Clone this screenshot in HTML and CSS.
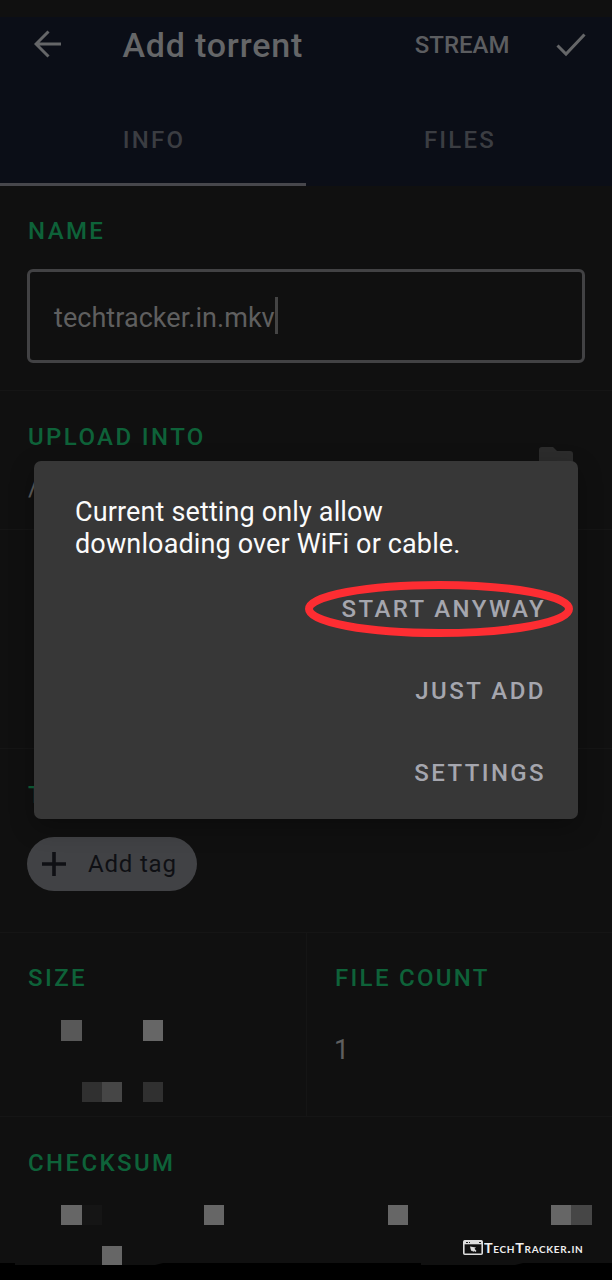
FILE: index.html
```html
<!DOCTYPE html>
<html lang="en">
<head>
<meta charset="utf-8">
<title>Add torrent</title>
<link rel="stylesheet" href="styles.css">
</head>
<body>
<div class="screen">
  <header class="header">
    <div class="toolbar">
      <svg class="back" viewBox="0 0 28 28"><path d="M27 14H2.500M14.500 1.500L2 14l12.500 12.500" fill="none" stroke="currentColor" stroke-width="3"/></svg>
      <h1 class="title">Add torrent</h1>
      <span class="stream">STREAM</span>
      <svg class="check" viewBox="0 0 30 24"><path d="M1.500 12.500l8.500 8.500L28.500 1.500" fill="none" stroke="currentColor" stroke-width="3"/></svg>
    </div>
    <nav class="tabs">
      <div class="tab tab-active">INFO</div>
      <div class="tab">FILES</div>
    </nav>
  </header>
  <section class="section name">
    <h2 class="label">NAME</h2>
    <div class="field"><span class="value">techtracker.in.mkv</span><span class="caret"></span></div>
  </section>
  <section class="section upload">
    <div>
      <h2 class="label">UPLOAD INTO</h2>
      <div class="path">/</div>
    </div>
    <svg class="folder" viewBox="0 0 34 28"><path d="M3 0h11l4 4h13a3 3 0 0 1 3 3v18a3 3 0 0 1-3 3H3a3 3 0 0 1-3-3V3a3 3 0 0 1 3-3z" fill="currentColor"/></svg>
  </section>
  <section class="section options"></section>
  <section class="section tags">
    <h2 class="label">TAGS</h2>
    <div class="chip">
      <svg class="plus" viewBox="0 0 24 24"><path d="M12 0v24M0 12h24" stroke="currentColor" stroke-width="3.600"/></svg>
      <span>Add tag</span>
    </div>
  </section>
  <section class="section facts">
    <div class="fact">
      <h2 class="label">SIZE</h2>
      <div class="mosaic mosaic-size">
        <i class="c3 r1 mid"></i><i class="c7 r1 light"></i>
        <i class="c4 r4 dim"></i><i class="c5 r4 soft"></i><i class="c7 r4 dim"></i>
      </div>
    </div>
    <div class="fact count">
      <h2 class="label">FILE COUNT</h2>
      <div class="number">1</div>
    </div>
  </section>
  <section class="section checksum">
    <h2 class="label">CHECKSUM</h2>
    <div class="mosaic mosaic-sum">
      <i class="c3 r1 light"></i><i class="c4 r1 faint"></i><i class="c10 r1 light"></i><i class="c19 r1 light"></i><i class="c27 r1 light"></i><i class="c28 r1 soft"></i>
      <i class="c5 r3 light"></i>
    </div>
  </section>
  <svg class="navbar" viewBox="0 0 612 17"><path d="M0 0h15v2h140l8-2h258v2h94l8-2h89v17H0z"/></svg>

  <div class="dialog">
    <p class="message">Current setting only allow<br>downloading over WiFi or cable.</p>
    <div class="actions">
      <span class="action start">START ANYWAY</span>
      <span class="action just">JUST ADD</span>
      <span class="action settings">SETTINGS</span>
    </div>
    <svg class="ring" viewBox="0 0 268 56"><ellipse cx="134" cy="28" rx="130" ry="24" fill="none" stroke="#fd2d32" stroke-width="8"/></svg>
  </div>

  <div class="brand">
    <svg class="window" viewBox="0 0 20 15"><rect x=".8" y=".8" width="18.400" height="13.400" rx="1" fill="none" stroke="#ddd" stroke-width="1.600"/><path d="M1 2.500h18" stroke="#ddd" stroke-width="3.600"/><path d="M3 2.500h2m1 0h1m9 0h2" stroke="#222" stroke-width="1.200"/><path d="M7 6.500l6 1-1.500 1.200 2 2.200-1.300 1.100-1.200-1.200-.6 1.200-1.600-1.500-.6.800z" fill="#ddd"/></svg>
    <span class="wordmark">TechTracker.in</span>
  </div>
</div>
</body>
</html>
```
FILE: styles.css
```css
* { box-sizing: border-box; }
body { margin: 0; background: #101010; font-family: Roboto, "Liberation Sans", sans-serif; }
.screen { position: relative; width: 612px; height: 1280px; overflow: hidden; padding-top: 17px; color: #5f5f5f; background: #101010; }
h1, h2, p { margin: 0; font-weight: 500; }
svg { display: block; }

.header { height: 169px; background: #0b0e17; }
.toolbar { display: flex; align-items: center; height: 56px; padding: 0 26px 0 34px; color: #656668; }
.back { width: 28px; height: 28px; margin-top: -2px; }
.title { margin-left: 60.5px; font-size: 34px; line-height: 56px; letter-spacing: 0.8px; }
.stream { margin-left: auto; font-size: 24px; font-weight: 500; line-height: 56px; color: #5c5d60; }
.check { width: 30px; height: 24px; margin-left: 46.5px; }
.tabs { display: grid; grid-template-columns: 1fr 1fr; height: 113px; }
.tab { padding: 38px 0 0 2px; text-align: center; font-size: 24px; font-weight: 500; line-height: 58px; letter-spacing: 2.2px; color: #3b3d42; }
.tab-active { border-bottom: 3px solid #47474c; }

.section { padding-left: 28px; border-bottom: 1px solid #151515; }
.label { font-size: 24px; line-height: 30px; letter-spacing: 2.4px; color: #0e6239; white-space: nowrap; }
.name { height: 205px; padding-top: 30px; padding-right: 27px; padding-left: 27px; }
.name .label { padding-left: 1px; }
.field { display: flex; align-items: center; height: 94px; margin-top: 23px; padding: 2px 0 0 24px; border: 3px solid #424244; border-radius: 6px; }
.value { padding-top: 1px; font-size: 27px; line-height: 36px; letter-spacing: 0.05px; }
.caret { width: 3px; height: 37px; margin-top: -3px; background: #444; }
.upload { display: flex; justify-content: space-between; height: 139px; padding-top: 31px; padding-right: 39px; }
.path { margin-top: 19px; font-size: 27px; line-height: 32px; }
.folder { width: 34px; height: 28px; margin-top: 25px; color: #2c2c2c; }
.options { height: 219px; }
.tags { height: 184px; padding-top: 31px; }
.chip { display: flex; align-items: center; width: 170px; height: 54px; margin: 27px 0 0 -1px; padding-left: 15px; border-radius: 27px; background: #414245; color: #0f1014; font-size: 24px; letter-spacing: 0.8px; }
.plus { width: 24px; height: 24px; margin-right: 22px; }
.facts { display: grid; grid-template-columns: 278px 1fr; height: 184px; }
.fact { padding-top: 30px; }
.count { padding-left: 28px; border-left: 1px solid #151515; }
.count .label { letter-spacing: 2.3px; }
.number { margin-top: 41px; margin-left: -1px; font-size: 27px; line-height: 32px; }
.checksum { height: 146px; padding-top: 31px; border: 0; }
.mosaic { display: grid; grid-template-columns: repeat(30, 20.42px); grid-auto-rows: 20.5px; width: 613px; margin-left: -28px; }
.mosaic-size { margin-top: 27.4px; }
.mosaic-sum { margin-top: 26.5px; }
.c3 { grid-column: 4; }
.c4 { grid-column: 5; }
.c5 { grid-column: 6; }
.c7 { grid-column: 8; }
.c10 { grid-column: 11; }
.c19 { grid-column: 20; }
.c27 { grid-column: 28; }
.c28 { grid-column: 29; }
.r1 { grid-row: 1; }
.r3 { grid-row: 3; }
.r4 { grid-row: 4; }
.light { background: #666; }
.mid { background: #585858; }
.soft { background: #464646; }
.dim { background: #303030; }
.faint { background: #151515; }
.navbar { position: relative; width: 612px; height: 17px; fill: #000; }

.dialog { position: absolute; top: 461px; left: 34px; width: 544px; height: 358px; padding: 35px 32px 0 41px; border-radius: 7px; background: #373737; box-shadow: 0 8px 24px rgba(0, 0, 0, 0.3); }
.message { font-size: 27px; font-weight: 400; line-height: 32px; letter-spacing: 0.14px; color: #fbfbfb; white-space: nowrap; }
.actions { display: flex; flex-direction: column; align-items: flex-end; margin-top: 8px; }
.action { font-size: 24px; font-weight: 500; line-height: 82px; letter-spacing: 2.4px; color: #a5a6ae; margin-bottom: -0.2px; white-space: nowrap; }
.just { letter-spacing: 2.5px; }
.ring { position: absolute; top: 120px; left: 271px; width: 268px; height: 56px; }

.brand { position: absolute; top: 1238px; left: 463px; display: flex; align-items: center; gap: 1px; }
.window { width: 20px; height: 15px; }
.wordmark { padding-top: 2px; font-family: Lato, sans-serif; font-size: 13px; font-weight: 700; font-variant: small-caps; line-height: 16px; letter-spacing: 0.6px; color: #eee; white-space: nowrap; transform: scaleX(1.11); transform-origin: left; }
```
